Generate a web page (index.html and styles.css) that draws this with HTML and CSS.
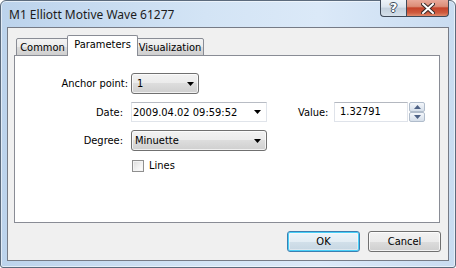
FILE: index.html
```html
<!DOCTYPE html>
<html>
<head>
<meta charset="utf-8">
<link rel="stylesheet" href="styles.css">
</head>
<body>
<div class="window">
  <div class="titlebar">
    <div class="title">M1 Elliott Motive Wave 61277</div>
    <div class="caption-btns">
      <div class="cbtn help"><span>?</span></div>
      <div class="cbtn close">
        <svg width="14" height="11" viewBox="0 0 14 11"><path d="M2 1 L12 10 M12 1 L2 10" stroke="#3a2a28" stroke-width="4" stroke-linecap="square"/><path d="M2 1 L12 10 M12 1 L2 10" stroke="#ffffff" stroke-width="2" stroke-linecap="square"/></svg>
      </div>
    </div>
  </div>
  <div class="client">
    <div class="tabs">
      <div class="tab tab-common">Common</div>
      <div class="tab tab-active">Parameters</div>
      <div class="tab tab-vis">Visualization</div>
    </div>
    <div class="panel">
      <div class="form">
        <div class="lbl lbl-wide">Anchor point:</div>
        <div class="combo combo-small"><span>1</span><svg class="arrow" width="7" height="4" viewBox="0 0 7 4"><path d="M0 0 H7 L3.5 4 Z" fill="#000"/></svg></div>

        <div class="lbl">Date:</div>
        <div class="row">
          <div class="picker"><span>2009.04.02 09:59:52</span><svg class="arrow" width="7" height="4" viewBox="0 0 7 4"><path d="M0 0 H7 L3.5 4 Z" fill="#000"/></svg></div>
          <div class="vlbl">Value:</div>
          <div class="edit">1.32791</div>
          <div class="spin">
            <div class="spin-btn"><svg width="7" height="4" viewBox="0 0 7 4"><path d="M0 4 H7 L3.5 0 Z" fill="#4d6185"/></svg></div>
            <div class="spin-btn"><svg width="7" height="4" viewBox="0 0 7 4"><path d="M0 0 H7 L3.5 4 Z" fill="#4d6185"/></svg></div>
          </div>
        </div>

        <div class="lbl">Degree:</div>
        <div class="combo combo-wide"><span>Minuette</span><svg class="arrow" width="7" height="4" viewBox="0 0 7 4"><path d="M0 0 H7 L3.5 4 Z" fill="#000"/></svg></div>

        <div></div>
        <div class="check"><span class="box"></span><span>Lines</span></div>
      </div>
    </div>
    <div class="buttons">
      <div class="btn btn-default">OK</div>
      <div class="btn">Cancel</div>
    </div>
  </div>
</div>
</body>
</html>
```

FILE: styles.css
```css
html, body {
  margin: 0;
  padding: 0;
  background: #ffffff;
}

.window {
  width: 456px;
  height: 268px;
  box-sizing: border-box;
  border: 1px solid #5c6b7d;
  border-radius: 6px 6px 3px 3px;
  background: linear-gradient(to right, #bcd3ec 0%, #d3e4f5 45%, #dbe9f8 70%, #c9dcf1 100%);
  box-shadow: inset 0 0 0 1px rgba(255,255,255,0.55);
  padding: 0 6px 6px 6px;
  display: flex;
  flex-direction: column;
  font-family: "DejaVu Sans Condensed", "DejaVu Sans", sans-serif;
  font-stretch: condensed;
  font-size: 11px;
  color: #000;
}

.titlebar {
  height: 26px;
  display: flex;
  justify-content: space-between;
  align-items: flex-start;
}

.title {
  font-family: "Noto Sans", "Open Sans", sans-serif;
  font-stretch: normal;
  font-size: 12px;
  color: #1c1c1c;
  padding: 6px 0 0 2px;
  line-height: 16px;
}

.caption-btns {
  display: flex;
  margin-top: -1px;
  margin-right: 0;
}

.cbtn {
  height: 17px;
  box-sizing: border-box;
  border: 1px solid #3f4a59;
  border-top: none;
  display: flex;
  align-items: center;
  justify-content: center;
}

.help {
  width: 26px;
  border-radius: 0 0 0 4px;
  border-right: none;
  background: linear-gradient(to bottom, #eef3f8 0%, #dbe4ee 45%, #c2cfdc 50%, #d5e0ea 100%);
}

.help span {
  font-family: "DejaVu Sans", sans-serif;
  font-stretch: normal;
  font-weight: bold;
  font-size: 13px;
  color: #ffffff;
  line-height: 14px;
  text-shadow: -1px 0 #3d4a5a, 1px 0 #3d4a5a, 0 -1px #3d4a5a, 0 1px #3d4a5a;
}

.close {
  width: 43px;
  border-radius: 0 0 4px 0;
  background: linear-gradient(to bottom, #e9a99a 0%, #dc8d78 40%, #c5432a 50%, #cf5b3f 80%, #e08b6c 100%);
}

.client {
  flex: 1;
  border: 1px solid #767b86;
  background: #f0f0f0;
  display: flex;
  flex-direction: column;
}

.tabs {
  display: flex;
  align-items: flex-end;
  height: 21px;
  margin: 7px 0 -1px 8px;
  position: relative;
  z-index: 1;
}

.tab {
  box-sizing: border-box;
  height: 18px;
  border: 1px solid #898c95;
  background: linear-gradient(to bottom, #f3f3f3 0%, #ebebeb 50%, #dddddd 50%, #cfcfcf 100%);
  display: flex;
  align-items: center;
  justify-content: center;
  padding-top: 1px;
  border-radius: 2px 2px 0 0;
}

.tab-common {
  width: 53px;
}

.tab-active {
  width: 71px;
  height: 21px;
  margin-left: -2px;
  background: #ffffff;
  border-bottom: none;
  position: relative;
  z-index: 2;
  padding-top: 0;
  padding-bottom: 3px;
}

.tab-vis {
  width: 68px;
  margin-left: -2px;
}

.panel {
  height: 168px;
  box-sizing: border-box;
  margin: 0 8px 0 6px;
  border: 1px solid #898c95;
  background: #ffffff;
}

.form {
  display: grid;
  grid-template-columns: 116px auto;
  grid-template-rows: 21px 20px 21px 13px;
  row-gap: 8px;
  align-items: center;
  padding-top: 17px;
}

.lbl {
  text-align: right;
  padding-right: 8px;
}

.lbl-wide {
  padding-right: 3px;
}

.combo {
  box-sizing: border-box;
  height: 21px;
  border: 1px solid #707070;
  border-radius: 3px;
  background: linear-gradient(to bottom, #f2f2f2 0%, #ebebeb 50%, #dddddd 50%, #cfcfcf 100%);
  box-shadow: inset 0 0 0 1px rgba(255,255,255,0.7);
  display: flex;
  align-items: center;
  justify-content: space-between;
  padding: 0 4px 0 4px;
}

.combo-small {
  width: 68px;
}

.combo-small span {
  padding-left: 1px;
}

.combo-wide {
  width: 136px;
  padding-left: 3px;
  padding-right: 5px;
}

.row {
  display: flex;
  align-items: center;
  height: 20px;
}

.picker {
  box-sizing: border-box;
  width: 136px;
  height: 20px;
  border: 1px solid #e0e4ea;
  border-top-color: #b8bcc4;
  background: #ffffff;
  display: flex;
  align-items: center;
  justify-content: space-between;
  padding: 0 5px 0 1px;
}

.vlbl {
  margin-left: 31px;
  width: 36px;
}

.edit {
  box-sizing: border-box;
  width: 74px;
  height: 20px;
  border: 1px solid #dfe3ea;
  border-top-color: #b4b8c0;
  background: #ffffff;
  padding: 0 0 0 5px;
  line-height: 18px;
}

.spin {
  width: 16px;
  height: 20px;
  margin-left: 1px;
  display: flex;
  flex-direction: column;
  justify-content: space-between;
}

.spin-btn {
  box-sizing: border-box;
  height: 10px;
  border: 1px solid #b0bccb;
  border-radius: 2px;
  background: linear-gradient(to bottom, #f4f7fb 0%, #e4eaf2 50%, #d6dfea 100%);
  display: flex;
  align-items: center;
  justify-content: center;
}

.check {
  display: flex;
  align-items: center;
  gap: 5px;
  padding-left: 1px;
}

.box {
  box-sizing: border-box;
  width: 12px;
  height: 12px;
  border: 1px solid #8f8f8f;
  background: linear-gradient(135deg, #dcdcdc 0%, #f4f4f4 60%, #ffffff 100%);
  box-shadow: inset 0 0 0 1px #f4f4f4;
}

.buttons {
  display: flex;
  justify-content: flex-end;
  gap: 8px;
  margin: 8px 7px 0 0;
}

.btn {
  box-sizing: border-box;
  width: 73px;
  height: 21px;
  border: 1px solid #707070;
  border-radius: 3px;
  background: linear-gradient(to bottom, #f2f2f2 0%, #ebebeb 50%, #dddddd 50%, #cfcfcf 100%);
  box-shadow: inset 0 0 0 1px rgba(255,255,255,0.75);
  display: flex;
  align-items: center;
  justify-content: center;
}

.btn-default {
  border-color: #3c7fb1;
  box-shadow: inset 0 0 0 1px #48d0f8, inset 0 0 0 2px rgba(255,255,255,0.4);
  background: linear-gradient(to bottom, #eef5fa 0%, #e3edf4 50%, #d2e0ea 50%, #c6d6e2 100%);
}
```
